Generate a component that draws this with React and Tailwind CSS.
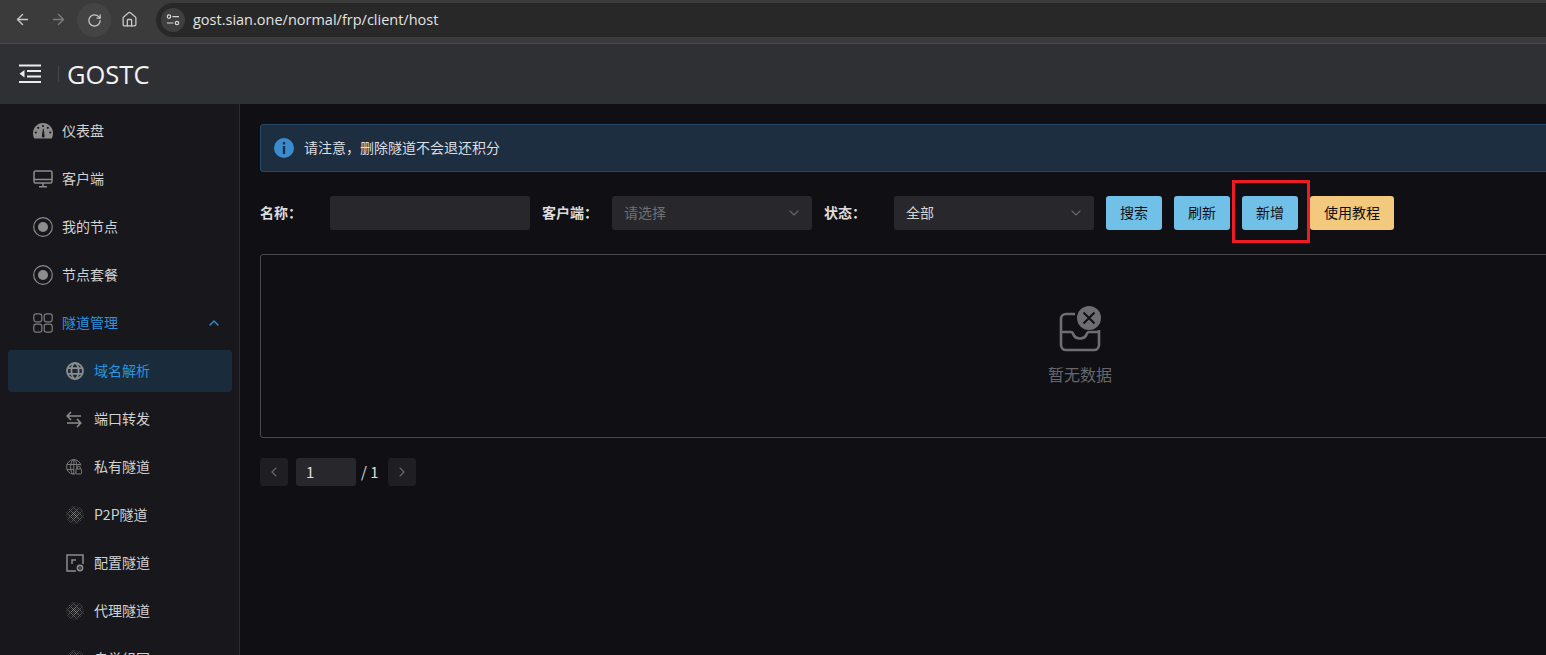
import React from "react";
import { ArrowLeft, ArrowRight, RotateCw, Home, ChevronDown, ChevronUp, ChevronLeft, ChevronRight } from "lucide-react";

const cjk = "font-['Noto_Sans_CJK_SC','Noto_Sans',sans-serif]";

const Gauge = () => (
  <svg width="20" height="16" viewBox="0 0 20 16" fill="#8c8c8c">
    <path d="M10 0C4.500 0 0 4.500 0 10.200c0 1.900.4 3.700 1.200 5.400h17.600c.8-1.700 1.200-3.500 1.200-5.400C20 4.500 15.500 0 10 0z" />
    <g fill="#18181c">
      <circle cx="10" cy="3" r="1.100" />
      <circle cx="5.200" cy="4.800" r="1.100" />
      <circle cx="14.800" cy="4.800" r="1.100" />
      <circle cx="2.800" cy="9.500" r="1.100" />
      <circle cx="17.200" cy="9.500" r="1.100" />
      <path d="M8.800 13.200 10 5.800h.7l.9 7.400a1.400 1.400 0 0 1-2.800 0z" />
    </g>
  </svg>
);

const Monitor = () => (
  <svg width="20" height="18" viewBox="0 0 20 18" fill="none" stroke="#8c8c8c" strokeWidth="1.5">
    <rect x="1" y="1" width="18" height="12" rx="1.500" />
    <path d="M1 9.500h18M10 13v3.500M6 16.800h8" />
  </svg>
);

const Radio = () => (
  <svg width="20" height="20" viewBox="0 0 20 20">
    <circle cx="10" cy="10" r="9.300" fill="none" stroke="#8c8c8c" strokeWidth="1.200" />
    <circle cx="10" cy="10" r="5" fill="#8c8c8c" />
  </svg>
);

const Apps = () => (
  <svg width="20" height="20" viewBox="0 0 20 20" fill="none" stroke="#7d7d7d" strokeWidth="1.200">
    <rect x="0.800" y="0.800" width="8" height="8" rx="2.200" />
    <rect x="11.200" y="0.800" width="8" height="8" rx="2.200" />
    <rect x="0.800" y="11.200" width="8" height="8" rx="2.200" />
    <rect x="11.200" y="11.200" width="8" height="8" rx="2.200" />
  </svg>
);

const Globe = () => (
  <svg width="18" height="18" viewBox="0 0 18 18" fill="none" stroke="#8c8c8c" strokeWidth="1.800">
    <circle cx="9" cy="9" r="8" />
    <ellipse cx="9" cy="9" rx="3.600" ry="8" />
    <path d="M1.600 6.200h14.800M1.600 11.800h14.800" />
  </svg>
);

const Swap = () => (
  <svg width="16" height="17" viewBox="0 0 16 17" fill="none" stroke="#8c8c8c" strokeWidth="1.600">
    <path d="M15 5H1.500M5 1 1.200 5 5 9M1 12h13.500M11 8l3.800 4-3.800 4" />
  </svg>
);

const GlobeLock = () => (
  <svg width="16" height="16" viewBox="0 0 16 16" fill="none" stroke="#7a7a7a" strokeWidth="1">
    <path d="M15 6.500A7.300 7.300 0 1 0 7 15.200" />
    <ellipse cx="7.800" cy="8" rx="3.200" ry="7.300" />
    <path d="M1 5.500h13.500M1 10.500h7M7.800 .7V15" />
    <rect x="10" y="10" width="5.600" height="5" rx=".8" fill="#18181c" strokeWidth="1" />
    <path d="M11.200 10V8.800a1.600 1.600 0 0 1 3.200 0V10" />
  </svg>
);

// dotted sphere, checker of pixels that fades toward the rim
const Sphere = () => {
  const dots = [];
  for (let y = 0; y < 18; y++) {
    for (let x = 0; x < 18; x++) {
      const d = Math.sqrt((x - 8.5) ** 2 + (y - 8.5) ** 2);
      if (d <= 9 && (x + y) % 2 === 0) {
        const bright = (Math.floor(x / 3) + Math.floor(y / 3)) % 2 === 0;
        dots.push(
          <rect
            key={`${x}-${y}`}
            x={x}
            y={y}
            width="1"
            height="1"
            fill="#9a9a9a"
            opacity={Math.max(0.15, (bright ? 1 : 0.55) - d * 0.085)}
          />
        );
      }
    }
  }
  return (
    <svg width="18" height="18" viewBox="0 0 18 18">
      {dots}
    </svg>
  );
};

const ConfigBox = () => (
  <svg width="18" height="18" viewBox="0 0 18 18" fill="none" stroke="#8c8c8c" strokeWidth="1.500">
    <path d="M10 16.900H1V1h16v9" />
    <path d="M6 10V6h4" />
    <circle cx="14" cy="14" r="2.600" fill="#18181c" strokeWidth="1.600" />
    <circle cx="14" cy="14" r="0.700" fill="#8c8c8c" stroke="none" />
  </svg>
);

const topItems = [
  { label: "仪表盘", icon: <Gauge /> },
  { label: "客户端", icon: <Monitor /> },
  { label: "我的节点", icon: <Radio /> },
  { label: "节点套餐", icon: <Radio /> },
];

const subItems = [
  { label: "域名解析", icon: <Globe />, active: true },
  { label: "端口转发", icon: <Swap /> },
  { label: "私有隧道", icon: <GlobeLock /> },
  { label: "P2P隧道", icon: <Sphere /> },
  { label: "配置隧道", icon: <ConfigBox /> },
  { label: "代理隧道", icon: <Sphere /> },
  { label: "自举组网", icon: <Sphere /> },
];

const Select = ({ text, muted }) => (
  <div className="w-[200px] h-[34px] shrink-0 rounded-[3px] bg-[#28282c] flex items-center justify-between pl-3 pr-[10px]">
    <span className={`pb-[2px] ${muted ? "text-[#6f6f72]" : "text-[#d4d4d5]"}`}>{text}</span>
    <ChevronDown size={16} strokeWidth={1.600} color="#66666a" />
  </div>
);

const Btn = ({ children, warn }) => (
  <button className={`h-[34px] px-[14px] pb-[2px] rounded-[3px] text-[#101014] text-[14px] shrink-0 ${warn ? "bg-[#f2c97d]" : "bg-[#70c0e8]"}`}>
    {children}
  </button>
);

const Label = ({ children, w }) => (
  <span className={`font-bold text-[#dcdcdc] shrink-0 pb-[2px] ${w}`}>{children}</span>
);

export default function App() {
  return (
    <div className={`w-[1546px] h-[655px] overflow-hidden flex flex-col bg-[#101014] text-[14px] ${cjk}`}>
      {/* Browser toolbar */}
      <div className="h-[44px] shrink-0 bg-[#3b3b3b] border-b border-[#4a4a4a] flex items-start pt-[3px] pl-[14px]">
        <ArrowLeft size={17} color="#c8c8c8" strokeWidth={2} className="mt-[8px]" />
        <ArrowRight size={17} color="#7b7b7b" strokeWidth={2} className="ml-[19px] mt-[8px]" />
        <div className="w-[34px] h-[34px] rounded-full bg-[#444444] flex items-center justify-center ml-[10px]">
          <RotateCw size={15} color="#c8c8c8" strokeWidth={2} />
        </div>
        <Home size={17} color="#c8c8c8" strokeWidth={1.800} className="ml-[10px] mt-[8px]" />
        <div className="ml-[18px] flex-1 h-[34px] rounded-l-full bg-[#282828] flex items-center pl-[5px]">
          <div className="w-[24px] h-[24px] rounded-full bg-[#3f3f3f] flex items-center justify-center">
            <svg width="14" height="12" viewBox="0 0 14 12" fill="none" stroke="#d8d8d8" strokeWidth="1.200">
              <circle cx="3" cy="2.600" r="1.700" />
              <path d="M6.500 2.600h6.500M1 9h6.500" />
              <circle cx="11" cy="9" r="1.700" />
            </svg>
          </div>
          <span className="ml-[8px] text-[14.500px] text-[#e3e3e3] font-['Open_Sans',sans-serif]">gost.sian.one/normal/frp/client/host</span>
        </div>
      </div>

      {/* App header */}
      <div className="h-[60px] shrink-0 bg-[#2f3033] flex items-center pl-[19px]">
        <svg width="22" height="20" viewBox="0 0 22 20" fill="#ececec">
          <rect x="0" y="0.500" width="22" height="2" />
          <rect x="8" y="6" width="14" height="2" />
          <rect x="8" y="11.500" width="14" height="2" />
          <rect x="0" y="17" width="22" height="2" />
          <path d="M5.500 6v7.500L0.500 9.800z" />
        </svg>
        <div className="w-px h-[16px] bg-[#46474a] ml-[17px]" />
        <span className="ml-[8px] text-[25.500px] text-[#f2f2f2] font-['Open_Sans',sans-serif]">GOSTC</span>
      </div>

      <div className="flex-1 flex min-h-0">
        {/* Sidebar */}
        <aside className="w-[240px] shrink-0 bg-[#18181c] border-r border-[#2d2d30] overflow-hidden pt-[6px] pl-2 pr-[7px] flex flex-col gap-[6px]">
          {topItems.map((it) => (
            <div key={it.label} className="h-[42px] shrink-0 flex items-center text-[#d2d2d3]">
              <div className="w-[54px] pl-[25px] flex justify-start">{it.icon}</div>
              <span className="pb-[2px]">{it.label}</span>
            </div>
          ))}
          <div className="h-[42px] shrink-0 flex items-center text-[#2a94e0]">
            <div className="w-[54px] pl-[25px]"><Apps /></div>
            <span className="pb-[2px]">隧道管理</span>
            <ChevronUp size={16} strokeWidth={2} className="ml-auto mr-[10px]" />
          </div>
          {subItems.map((it) => (
            <div
              key={it.label}
              className={`h-[42px] shrink-0 flex items-center rounded-[4px] ${it.active ? "bg-[#1a2c3b] text-[#2a94e0]" : "text-[#d2d2d3]"}`}
            >
              <div className="w-[86px] pl-[58px] flex justify-start">{it.icon}</div>
              <span className="pb-[2px]">{it.label}</span>
            </div>
          ))}
        </aside>

        {/* Main */}
        <main className="flex-1 min-w-0 overflow-hidden relative p-5">
          <div className="w-[1640px]">
            <div className="h-[48px] rounded-[3px] bg-[#1c2e40] border border-[#25496a] flex items-center pl-[13px]">
              <span className="w-[20px] h-[20px] rounded-full bg-[#3a8ccf] flex items-center justify-center">
                <svg width="4" height="12" viewBox="0 0 4 12" fill="#1c2e40">
                  <rect x="0.800" y="0" width="2.400" height="2.400" />
                  <rect x="0.800" y="4" width="2.400" height="8" />
                </svg>
              </span>
              <span className="ml-[10px] pb-[2px] text-[#dcdfe2]">请注意，删除隧道不会退还积分</span>
            </div>

            <div className="mt-6 flex items-center">
              <Label w="w-[70px]">名称：</Label>
              <div className="w-[200px] h-[34px] shrink-0 rounded-[3px] bg-[#28282c]" />
              <div className="w-3 shrink-0" />
              <Label w="w-[70px]">客户端：</Label>
              <Select text="请选择" muted />
              <div className="w-3 shrink-0" />
              <Label w="w-[70px]">状态：</Label>
              <Select text="全部" />
              <div className="ml-3 flex gap-3">
                <Btn>搜索</Btn>
                <Btn>刷新</Btn>
                <Btn>新增</Btn>
                <Btn warn>使用教程</Btn>
              </div>
            </div>

            <div className="mt-6 h-[184px] rounded-[3px] border border-[#4a4a4d] flex flex-col items-center justify-center">
              <svg width="44" height="48" viewBox="0 0 44 48" fill="none" className="mt-[-1px]">
                <path d="M17 8H8a5 5 0 0 0-5 5v26a5 5 0 0 0 5 5h28a5 5 0 0 0 5-5V24" stroke="#6e6e70" strokeWidth="2.600" />
                <path d="M3 26h10c1 0 1.600.6 2 1.500 1 3 4 5 7 5s6-2 7-5c.4-.9 1-1.500 2-1.500h10" stroke="#6e6e70" strokeWidth="2.600" />
                <circle cx="31" cy="12" r="12" fill="#6e6e70" />
                <path d="M25.500 6.500l11 11M36.500 6.500l-11 11" stroke="#101014" strokeWidth="2" />
              </svg>
              <span className="mt-[8px] text-[16px] text-[#66666a]">暂无数据</span>
            </div>

            <div className="mt-5 flex items-center">
              <div className="w-[28px] h-[28px] rounded-[3px] bg-[#1f1f23] flex items-center justify-center">
                <ChevronLeft size={16} strokeWidth={1.600} color="#6a6a6d" />
              </div>
              <div className="ml-2 w-[60px] h-[28px] rounded-[3px] bg-[#28282c] flex items-center pl-[10px] text-[15px] text-[#dcdcdc]">1</div>
              <span className="ml-[5px] text-[15px] text-[#dcdcdc]">/ 1</span>
              <div className="ml-[9px] w-[28px] h-[28px] rounded-[3px] bg-[#1f1f23] flex items-center justify-center">
                <ChevronRight size={16} strokeWidth={1.600} color="#6a6a6d" />
              </div>
            </div>
          </div>

          {/* Red annotation around the add button */}
          <div className="absolute left-[992px] top-[76px] w-[78px] h-[63px] border-[3px] border-[#ed1c24]" />
        </main>
      </div>
    </div>
  );
}
